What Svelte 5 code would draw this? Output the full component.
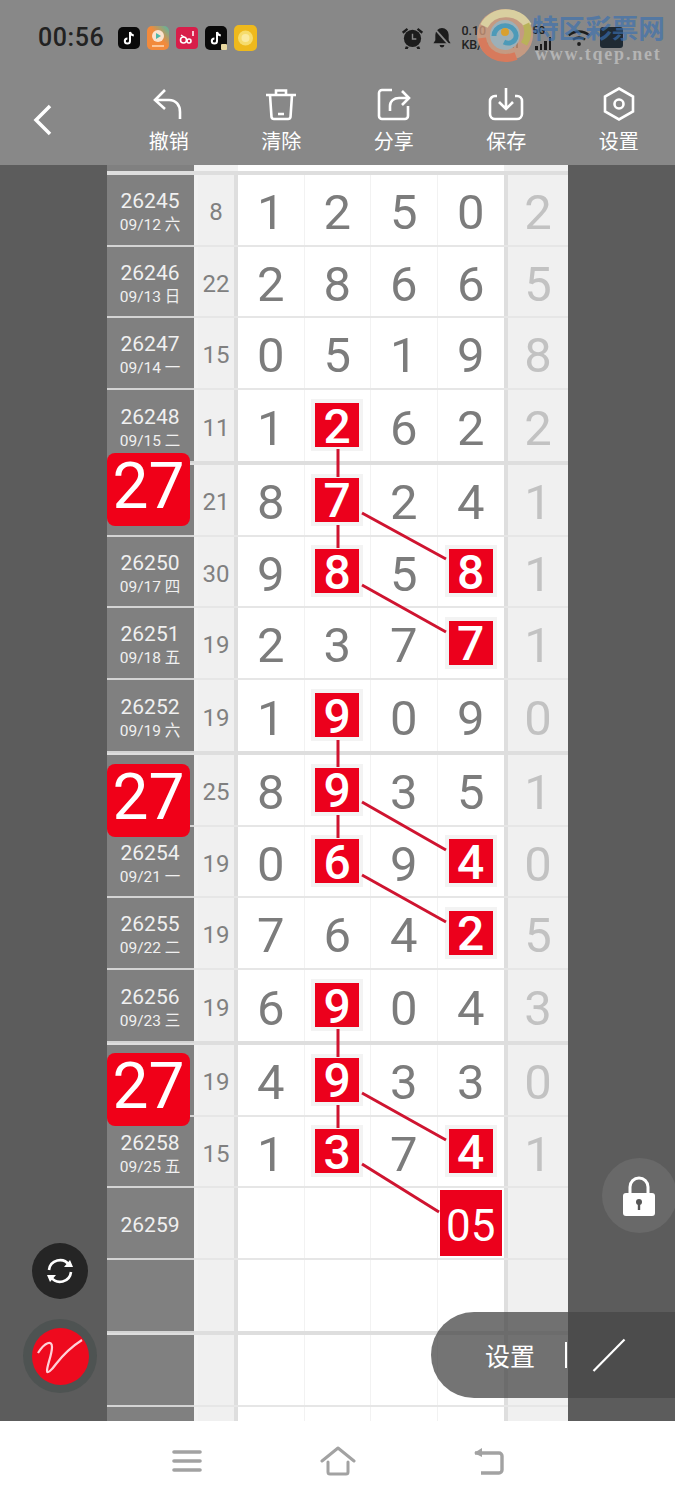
<script>
  const groups = [
    [
      ['26245', '09/12 六', 8, '1250', 2, []],
      ['26246', '09/13 日', 22, '2866', 5, []],
      ['26247', '09/14 一', 15, '0519', 8, []],
      ['26248', '09/15 二', 11, '1262', 2, [1]]
    ],
    [
      ['', '', 21, '8724', 1, [1]],
      ['26250', '09/17 四', 30, '9858', 1, [1, 3]],
      ['26251', '09/18 五', 19, '2377', 1, [3]],
      ['26252', '09/19 六', 19, '1909', 0, [1]]
    ],
    [
      ['', '', 25, '8935', 1, [1]],
      ['26254', '09/21 一', 19, '0694', 0, [1, 3]],
      ['26255', '09/22 二', 19, '7642', 5, [3]],
      ['26256', '09/23 三', 19, '6904', 3, [1]]
    ],
    [
      ['', '', 19, '4933', 0, [1]],
      ['26258', '09/25 五', 15, '1374', 1, [1, 3]],
      ['26259', '', '', '', '', []],
      ['', '', '', '', '', []]
    ],
    [
      ['', '', '', '', '', []],
      ['', '', '', '', '', []]
    ]
  ];

  const badges = [288, 599, 888];

  const links = [
    [338, 449, 338, 477], [338, 525, 338, 548], [362, 513, 446, 559], [362, 585, 446, 632],
    [338, 740, 338, 767], [338, 815, 338, 838], [362, 802, 446, 850], [362, 875, 446, 922],
    [338, 1029, 338, 1057], [338, 1105, 338, 1128], [362, 1093, 446, 1140], [362, 1164, 439, 1212]
  ];

  const cols = [0, 1, 2, 3];
</script>

<div class="app">
  <header class="top">
    <div class="status">
      <span class="time">00:56</span>
      <div class="apps">
        <svg width="22" height="22" viewBox="0 0 22 22"><rect width="22" height="22" rx="5" fill="#0a0a0a"/><path d="M12 5v9a2.600 2.600 0 1 1-2.600-2.600M12 5c.4 2 1.700 3.200 3.800 3.400" fill="none" stroke="#fff" stroke-width="2"/></svg>
        <svg width="22" height="24" viewBox="0 0 22 24"><defs><linearGradient id="vid" x1="0" y1="1" x2="1" y2="0"><stop offset=".55" stop-color="#f28a3c"/><stop offset="1" stop-color="#4fb8a8"/></linearGradient></defs><rect width="22" height="24" rx="5" fill="url(#vid)"/><circle cx="11" cy="10" r="6" fill="#fbe3cf"/><path d="M9 7l5 3-5 3z" fill="#4fb8a8"/><rect x="5" y="19" width="12" height="2" fill="#fbc69a"/></svg>
        <svg width="22" height="22" viewBox="0 0 22 22"><rect width="22" height="22" rx="4" fill="#d81e4a"/><circle cx="7.500" cy="13" r="3" fill="none" stroke="#fff" stroke-width="1.600"/><circle cx="13" cy="14" r="2" fill="none" stroke="#fff" stroke-width="1.600"/><path d="M5 8l3 2M17 4v5" stroke="#fff" stroke-width="1.500"/></svg>
        <svg width="22" height="24" viewBox="0 0 22 24"><rect width="22" height="24" rx="5" fill="#0a0a0a"/><path d="M12 6v9a2.600 2.600 0 1 1-2.600-2.600M12 6c.4 2 1.700 3.200 3.800 3.400" fill="none" stroke="#fff" stroke-width="2"/><rect x="16" y="18" width="6" height="6" rx="1" fill="#e8d8a0"/></svg>
        <svg width="23" height="26" viewBox="0 0 23 26"><rect width="23" height="26" rx="5" fill="#eeb91c"/><circle cx="11.500" cy="13" r="7.500" fill="#f6dc6c"/><circle cx="11.500" cy="13" r="4" fill="#fbeaa0"/></svg>
      </div>
      <div class="sys">
        <svg width="23" height="23" viewBox="0 0 24 24" fill="#1c1c1c"><circle cx="12" cy="13" r="9"/><path d="M1 6l5-4 1.500 2-5 4zM23 6l-5-4-1.500 2 5 4zM5 21l-1 3h3l1-2zM19 21l1 3h-3l-1-2z"/><path d="M12 8v5.500h4" fill="none" stroke="#888" stroke-width="1.500"/></svg>
        <svg width="20" height="23" viewBox="0 0 21 24" fill="#1c1c1c"><path d="M10.500 2a7 7 0 0 1 7 7v6l2 3H1.500l2-3V9a7 7 0 0 1 7-7zM8 20h5a2.500 2.500 0 0 1-5 0z"/><path d="M2 2l17 19" stroke="#888" stroke-width="2"/></svg>
        <span class="speed">0.10<br />KB/s</span>
        <span class="signal red"><i></i><i></i><i></i><i></i></span>
        <span class="net">
          <b>5G</b>
          <span class="signal"><i></i><i></i><i></i><i></i></span>
        </span>
        <svg class="wifi" width="24" height="20" viewBox="0 0 28 20" fill="none" stroke="#1c1c1c" stroke-width="2.800"><path d="M2 7c7-6 17-6 24 0M7 12c4-3.500 10-3.500 14 0"/><circle cx="14" cy="17" r="2.200" fill="#1c1c1c" stroke="none"/></svg>
        <span class="battery"></span>
      </div>
    </div>
    <div class="mark" aria-hidden="true">
      <svg class="logo" width="62" height="58" viewBox="0 0 62 58" fill="none">
        <ellipse cx="31" cy="29" rx="28" ry="26" fill="#d8a080" opacity=".75"/>
        <path d="M10 20C18 4 44 2 54 20" stroke="#d9cfa0" stroke-width="8"/>
        <path d="M8 32c2 16 18 24 34 18" stroke="#d77a5c" stroke-width="8"/>
        <path d="M50 38c6-10 4-16 2-20" stroke="#b9b25a" stroke-width="7"/>
        <circle cx="31" cy="29" r="15" fill="#9cb0b8"/>
        <path d="M20 30c0-10 14-14 20-6s-2 16-10 12" stroke="#4d9ab8" stroke-width="5"/>
        <circle cx="31" cy="26" r="4" fill="#d9a030"/>
      </svg>
      <div class="mark-text">
        <span class="mark-cn">特区彩票网</span>
        <span class="mark-en">www.tqep.net</span>
      </div>
    </div>
    <div class="bar">
      <div class="back">
        <svg width="20" height="32" viewBox="0 0 20 32" fill="none" stroke="#fff" stroke-width="3.500"><path d="M17 2L3 16l14 14"/></svg>
      </div>
      <div class="tools">
        <div class="tool">
          <svg width="34" height="34" viewBox="0 0 34 34" fill="none" stroke="#fff" stroke-width="2.600"><path d="M13 3L3 13l10 9M3 13h14c7 0 11 5 11 12v7"/></svg>
          <span>撤销</span>
        </div>
        <div class="tool">
          <svg width="34" height="34" viewBox="0 0 34 34" fill="none" stroke="#fff" stroke-width="2.600"><path d="M2 8h30M12 8V3.500h10V8M6 8l1.500 22a2.500 2.500 0 0 0 2.500 2h14a2.500 2.500 0 0 0 2.500-2L28 8M14 27h6"/></svg>
          <span>清除</span>
        </div>
        <div class="tool">
          <svg width="34" height="34" viewBox="0 0 34 34" fill="none" stroke="#fff" stroke-width="2.600"><path d="M15 3H5a3 3 0 0 0-3 3v23a3 3 0 0 0 3 3h23a3 3 0 0 0 3-3V19M13 24v-5c0-5 4-8 9-8h9M25 4l7 7-7 7"/></svg>
          <span>分享</span>
        </div>
        <div class="tool">
          <svg width="36" height="34" viewBox="0 0 36 34" fill="none" stroke="#fff" stroke-width="2.600"><path d="M9 9H7a5 5 0 0 0-5 5v13a5 5 0 0 0 5 5h22a5 5 0 0 0 5-5V14a5 5 0 0 0-5-5h-2M18 1v21M11 15l7 7 7-7"/></svg>
          <span>保存</span>
        </div>
        <div class="tool">
          <svg width="34" height="34" viewBox="0 0 34 34" fill="none" stroke="#fff" stroke-width="2.600"><path d="M17 1.500L31 9.500v15L17 32.500 3 24.500v-15z"/><circle cx="17" cy="17" r="4.500"/></svg>
          <span>设置</span>
        </div>
      </div>
    </div>
  </header>

  <main class="stage">
    <div class="sheet">
      <div class="stub"></div>
      {#each groups as group}
        <section class="group">
          {#each group as [id, date, sum, digits, tail, hits]}
            <div class="row">
              <div class="id">
                {#if id}<span class="num">{id}</span>{/if}
                {#if date}<span class="date">{date}</span>{/if}
              </div>
              <div class="rule thin"></div>
              <div class="sum">{sum}</div>
              <div class="rule"></div>
              {#each cols as c}
                <div class="cell">
                  {#if hits.includes(c)}
                    <span class="hit">{digits[c]}</span>
                  {:else if id === '26259' && c === 3}
                    <span class="hit big">05</span>
                  {:else if digits[c]}
                    <span class="digit">{digits[c]}</span>
                  {/if}
                </div>
              {/each}
              <div class="rule"></div>
              <div class="tail"><span class="digit">{tail}</span></div>
            </div>
          {/each}
        </section>
      {/each}

      <svg class="links" width="461" height="1256" viewBox="107 165 461 1256">
        {#each links as [x1, y1, x2, y2]}
          <line {x1} {y1} {x2} {y2} />
        {/each}
      </svg>

      {#each badges as top}
        <div class="badge" style="top: {top}px">27</div>
      {/each}
    </div>

    <div class="lock">
      <svg width="34" height="40" viewBox="0 0 34 40"><path d="M8 18v-7a9 9 0 0 1 18 0v7" fill="none" stroke="#fff" stroke-width="3"/><rect x="1" y="17" width="32" height="23" rx="3" fill="#fff"/><circle cx="17" cy="26" r="3" fill="#555"/><rect x="15.800" y="27" width="2.400" height="7" fill="#555"/></svg>
    </div>

    <div class="round sync">
      <svg width="32" height="30" viewBox="0 0 32 30" fill="none" stroke="#fff" stroke-width="2.600"><path d="M5 14a11 11 0 0 1 20-5M27 16a11 11 0 0 1-20 5"/><path d="M20 11h9l-3-7zM12 19H3l3 7z" fill="#fff" stroke="none"/></svg>
    </div>

    <div class="pen-ring">
      <div class="pen">
        <svg width="46" height="36" viewBox="0 0 46 36" fill="none" stroke="#ffd0d8" stroke-width="2.200"><path d="M1 15C8 4 15 2 15 9c0 8-5 18-5 24 0 3 4 0 9-7C26 17 34 9 45 2"/></svg>
      </div>
    </div>

    <div class="pill">
      <span class="pill-label">设置</span>
      <span class="pill-sep"></span>
      <svg width="34" height="34" viewBox="0 0 34 34"><path d="M1.500 33L32.500 1.500" stroke="#fff" stroke-width="2.200"/></svg>
    </div>
  </main>

  <nav class="nav">
    <svg width="30" height="24" viewBox="0 0 30 24" fill="none" stroke="#a2a2a2" stroke-width="3.600" stroke-linecap="round"><path d="M2 3h26M2 12h26M2 21h26"/></svg>
    <svg width="36" height="30" viewBox="0 0 36 30" fill="none" stroke="#a2a2a2" stroke-width="3" stroke-linecap="round" stroke-linejoin="round"><path d="M2 15L18 2l16 13M8 16v10a2 2 0 0 0 2 2h16a2 2 0 0 0 2-2V16"/></svg>
    <svg width="32" height="28" viewBox="0 0 32 28" fill="none" stroke="#a2a2a2" stroke-width="3.400" stroke-linejoin="round"><path d="M2 6h24a3 3 0 0 1 3 3v14a3 3 0 0 1-3 3H8"/><path d="M1 6l8-5v9z" fill="#a2a2a2" stroke="none"/></svg>
  </nav>
</div>

<style>
  :global(body) {
    margin: 0;
  }

  .app {
    width: 675px;
    height: 1500px;
    display: flex;
    flex-direction: column;
    overflow: hidden;
    font-family: Roboto, "Noto Sans CJK SC", sans-serif;
    position: relative;
  }

  .top {
    height: 165px;
    background: #888;
    position: relative;
    flex: none;
  }

  .status {
    height: 75px;
    display: flex;
    align-items: center;
    padding: 0 0 0 38px;
    box-sizing: border-box;
  }

  .time {
    font-size: 25px;
    font-weight: 500;
    color: #222;
    letter-spacing: 0.6px;
    margin-right: 14px;
  }

  .apps {
    display: flex;
    align-items: center;
    gap: 7px;
  }

  .sys {
    display: flex;
    align-items: center;
    margin-left: 144px;
    gap: 8px;
  }

  .speed {
    font-size: 12.500px;
    line-height: 14px;
    font-weight: 500;
    color: #222;
    margin-left: 1px;
    width: 33px;
  }

  .net {
    display: flex;
    flex-direction: column;
    align-items: flex-start;
    width: 27px;
    padding-left: 1px;
  }

  .net b {
    font-size: 10px;
    line-height: 11px;
    color: #1c1c1c;
  }

  .signal {
    display: flex;
    align-items: flex-end;
    gap: 2px;
    height: 20px;
  }

  .net .signal {
    height: 14px;
    margin-left: 3px;
  }

  .signal i {
    width: 2.500px;
    background: #1c1c1c;
    height: 4px;
  }

  .signal i:nth-child(2) { height: 6px; }
  .signal i:nth-child(3) { height: 9px; }
  .signal i:nth-child(4) { height: 13px; }

  .signal.red {
    width: 21px;
  }

  .battery {
    width: 23px;
    height: 21px;
    background: #1f2a33;
    border-radius: 3px;
    margin-left: 1px;
  }

  .mark {
    position: absolute;
    left: 474px;
    top: 6px;
    display: flex;
    gap: 0;
  }

  .mark-text {
    display: flex;
    flex-direction: column;
    margin-left: -4px;
    padding-top: 8px;
  }

  .mark-cn {
    font-size: 26.600px;
    line-height: 30px;
    color: rgba(58, 112, 176, 0.68);
    font-weight: 700;
  }

  .mark-en {
    font-family: "Liberation Serif", serif;
    font-size: 18px;
    line-height: 20px;
    font-weight: 700;
    letter-spacing: 1.800px;
    color: #b4b4b4;
    padding-left: 3px;
  }

  .bar {
    display: flex;
    height: 90px;
  }

  .back {
    width: 112.5px;
    flex: none;
    padding: 29px 0 0 33px;
    box-sizing: border-box;
  }

  .tools {
    display: flex;
    flex: 1;
  }

  .tool {
    width: 112.5px;
    display: flex;
    flex-direction: column;
    align-items: center;
    color: #fff;
    font-size: 20px;
    line-height: 28px;
    padding-top: 12px;
    box-sizing: border-box;
  }

  .tool svg {
    margin-bottom: 7px;
  }

  .stage {
    height: 1256px;
    flex: none;
    background: #5c5c5c;
    position: relative;
    overflow: hidden;
  }

  .sheet {
    margin-left: 107px;
    width: 461px;
    height: 1256px;
    position: relative;
    overflow: visible;
    background: #fff;
  }

  .stub {
    height: 6px;
    background: linear-gradient(to right, #808080 87px, #f2f2f2 87px, #f2f2f2 131px, #fff 131px, #fff 397px, #f0f0f0 397px);
  }

  .group {
    border-top: 4px solid #dedede;
  }

  .row {
    display: grid;
    grid-template-columns: 87px 4px 36px 4px repeat(4, 66.5px) 4px 60px;
    height: 71.5px;
    box-sizing: border-box;
    border-bottom: 2px solid #e6e6e6;
  }

  .row:last-child {
    border-bottom: none;
  }

  .id {
    background: #808080;
    color: #f0f0f0;
    display: flex;
    flex-direction: column;
    align-items: center;
    justify-content: center;
    padding: 6px 1px 0 0;
    box-sizing: border-box;
    box-shadow: 0 2px 0 #d4d4d4;
  }

  .num {
    font-size: 21px;
    line-height: 25px;
  }

  .date {
    font-size: 15.500px;
    line-height: 22px;
  }

  .rule {
    background: #dedede;
  }

  .rule.thin {
    background: #f2f2f2;
  }

  .sum {
    background: #f0f0f0;
    color: #808080;
    font-size: 24px;
    display: flex;
    align-items: center;
    justify-content: center;
    padding-top: 5px;
    box-sizing: border-box;
  }

  .cell,
  .tail {
    font-size: 49px;
    color: #7c7c7c;
    display: flex;
    align-items: center;
    justify-content: center;
  }

  .digit {
    padding-top: 6px;
  }

  .cell {
    border-right: 1px solid #f2f2f2;
    box-sizing: border-box;
    background: #fff;
  }

  .cell:nth-of-type(8) {
    border-right: none;
  }

  .tail {
    background: #f0f0f0;
    color: #c2c2c2;
  }

  .hit {
    width: 44px;
    height: 44px;
    background: #ec001c;
    color: #fff;
    box-shadow: 0 0 0 4px #f3f3f3;
    display: flex;
    align-items: center;
    justify-content: center;
    font-size: 48px;
    font-weight: 500;
    line-height: 1;
    position: relative;
    z-index: 1;
    padding-top: 3px;
    box-sizing: border-box;
  }

  .hit.big {
    width: 62px;
    height: 66px;
    font-size: 44px;
    font-weight: 400;
    box-shadow: none;
    padding-top: 6px;
  }

  .links {
    position: absolute;
    left: 0;
    top: 0;
    z-index: 2;
    pointer-events: none;
  }

  .links line {
    stroke: #cf1430;
    stroke-width: 3;
  }

  .badge {
    position: absolute;
    left: 0;
    width: 83px;
    height: 73px;
    border-radius: 8px;
    background: #f00018;
    color: #fff;
    font-size: 64px;
    line-height: 68px;
    text-align: center;
    z-index: 3;
  }

  .lock {
    position: absolute;
    left: 602px;
    top: 993px;
    width: 75px;
    height: 75px;
    border-radius: 50%;
    background: #696969;
    display: flex;
    align-items: center;
    justify-content: center;
    padding-right: 2px;
    box-sizing: border-box;
  }

  .round {
    position: absolute;
    left: 32px;
    top: 1078px;
    width: 56px;
    height: 56px;
    border-radius: 50%;
    background: #252525;
    display: flex;
    align-items: center;
    justify-content: center;
  }

  .pen-ring {
    position: absolute;
    left: 23px;
    top: 1154px;
    width: 74px;
    height: 74px;
    border-radius: 50%;
    background: #4e5352;
    display: flex;
    align-items: center;
    justify-content: center;
  }

  .pen {
    width: 57px;
    height: 57px;
    border-radius: 50%;
    background: #ee0a1e;
    display: flex;
    align-items: center;
    justify-content: center;
  }

  .pill {
    position: absolute;
    left: 431px;
    top: 1147px;
    width: 244px;
    height: 86px;
    border-radius: 43px 0 0 43px;
    background: rgba(72, 72, 72, 0.755);
    display: flex;
    align-items: center;
    color: #fff;
    font-size: 25px;
    z-index: 4;
  }

  .pill-label {
    margin-left: 54px;
    width: 55px;
  }

  .pill-sep {
    width: 2px;
    height: 26px;
    background: #fff;
    margin-left: 25px;
    margin-right: 25px;
  }

  .nav {
    flex: 1;
    background: #fff;
    display: flex;
    align-items: center;
    justify-content: center;
    gap: 117.5px;
    padding-left: 2px;
    position: relative;
    z-index: 1;
  }
</style>
